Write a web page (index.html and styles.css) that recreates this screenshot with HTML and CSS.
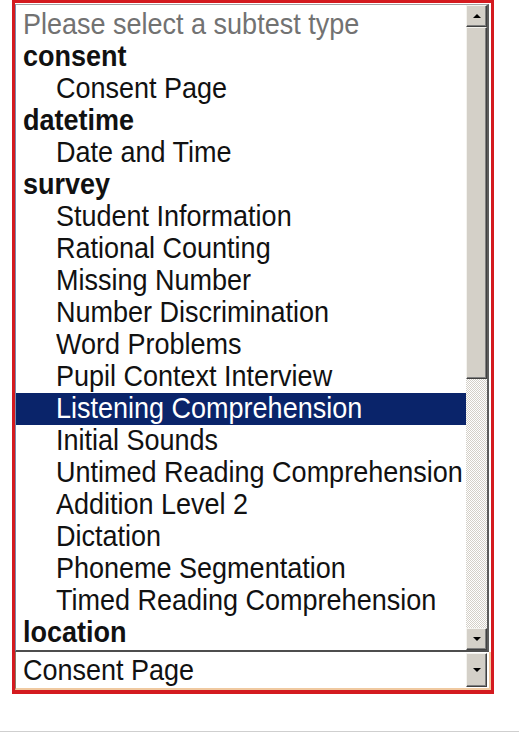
FILE: index.html
```html
<!DOCTYPE html>
<html>
<head>
<meta charset="utf-8">
<link rel="stylesheet" href="styles.css">
</head>
<body>
<div class="frame">
  <div class="listbox">
    <ul class="options">
      <li class="row opt placeholder"><span class="txt">Please select a subtest type</span></li>
      <li class="row grp"><span class="txt">consent</span></li>
      <li class="row opt"><span class="txt">Consent Page</span></li>
      <li class="row grp"><span class="txt">datetime</span></li>
      <li class="row opt"><span class="txt">Date and Time</span></li>
      <li class="row grp"><span class="txt">survey</span></li>
      <li class="row opt"><span class="txt">Student Information</span></li>
      <li class="row opt"><span class="txt">Rational Counting</span></li>
      <li class="row opt"><span class="txt">Missing Number</span></li>
      <li class="row opt"><span class="txt">Number Discrimination</span></li>
      <li class="row opt"><span class="txt">Word Problems</span></li>
      <li class="row opt"><span class="txt">Pupil Context Interview</span></li>
      <li class="row opt selected"><span class="txt">Listening Comprehension</span></li>
      <li class="row opt"><span class="txt">Initial Sounds</span></li>
      <li class="row opt"><span class="txt">Untimed Reading Comprehension</span></li>
      <li class="row opt"><span class="txt">Addition Level 2</span></li>
      <li class="row opt"><span class="txt">Dictation</span></li>
      <li class="row opt"><span class="txt">Phoneme Segmentation</span></li>
      <li class="row opt"><span class="txt">Timed Reading Comprehension</span></li>
      <li class="row grp"><span class="txt">location</span></li>
    </ul>
    <div class="scrollbar">
      <div class="sb-btn"><span class="arrow-up"></span></div>
      <div class="sb-thumb"></div>
      <div class="sb-track"></div>
      <div class="sb-btn"><span class="arrow-down"></span></div>
    </div>
  </div>
  <div class="combo">
    <span class="combo-text"><span class="txt">Consent Page</span></span>
    <div class="combo-btn"><span class="arrow-down"></span></div>
  </div>
</div>
<div class="footer-line"></div>
</body>
</html>
```
FILE: styles.css
```css
html, body {
  margin: 0;
  padding: 0;
  background: #ffffff;
}

body {
  width: 519px;
  height: 733px;
  overflow: hidden;
  font-family: "Liberation Sans", Arial, sans-serif;
  color: #111111;
}

.frame {
  margin-left: 12px;
  width: 476px;
  border: 3px solid #d41a1f;
  border-bottom-width: 4px;
  background: #ffffff;
}

.listbox {
  display: flex;
  margin-top: 1px;
  margin-right: 2px;
  height: 648px;
  box-sizing: border-box;
  border-top: 1px solid #a3a3a3;
  border-left: 1px solid #7d8cab;
  border-right: 2px solid #5c5c5c;
  border-bottom: 2px solid #4e4e4e;
}

.options {
  list-style: none;
  margin: 0;
  padding: 4px 0 0 0;
  width: 450px;
  overflow: hidden;
}

.row {
  height: 32px;
  line-height: 30px;
  font-size: 30px;
  white-space: nowrap;
}

.txt {
  display: inline-block;
  transform: scaleX(0.9);
  transform-origin: 0 50%;
}

.grp {
  padding-left: 7px;
  font-weight: bold;
}

.opt {
  padding-left: 40px;
}

.placeholder {
  padding-left: 7px;
  color: #727272;
}

.selected {
  background: #0a246a;
  color: #ffffff;
}

.scrollbar {
  width: 21px;
  display: flex;
  flex-direction: column;
}

.sb-btn {
  height: 22px;
  box-sizing: border-box;
  background: #d4d0c8;
  border-top: 1px solid #f4f3ef;
  border-left: 1px solid #f4f3ef;
  border-right: 1px solid #404040;
  border-bottom: 1px solid #404040;
  box-shadow: inset -1px -1px 0 #808080;
  display: flex;
  align-items: center;
  justify-content: center;
}

.sb-thumb {
  height: 352px;
  box-sizing: border-box;
  background: #d4d0c8;
  border-top: 1px solid #f4f3ef;
  border-left: 1px solid #f4f3ef;
  border-right: 1px solid #404040;
  border-bottom: 1px solid #404040;
  box-shadow: inset -1px -1px 0 #808080;
}

.sb-track {
  flex: 1;
  background-color: #ffffff;
  background-image: conic-gradient(#d4d0c8 25%, #ffffff 0 50%, #d4d0c8 0 75%, #ffffff 0);
  background-size: 2px 2px;
}

.arrow-up {
  width: 0;
  height: 0;
  border-left: 4px solid transparent;
  border-right: 4px solid transparent;
  border-bottom: 4px solid #000000;
}

.arrow-down {
  width: 0;
  height: 0;
  border-left: 4px solid transparent;
  border-right: 4px solid transparent;
  border-top: 4px solid #000000;
}

.combo {
  display: flex;
  height: 38px;
  box-sizing: border-box;
  border-left: 1px solid #8a7a66;
  border-right: 2px solid #f0c9a0;
  border-bottom: 2px solid #f0c9a0;
  background: #ffffff;
}

.combo-text {
  flex: 1;
  padding-left: 7px;
  font-size: 30px;
  line-height: 36px;
  white-space: nowrap;
}

.combo-btn {
  width: 21px;
  margin: 1px 2px 1px 0;
  box-sizing: border-box;
  background: #d4d0c8;
  border-top: 1px solid #f4f3ef;
  border-left: 1px solid #f4f3ef;
  border-right: 1px solid #404040;
  border-bottom: 1px solid #404040;
  box-shadow: inset -1px -1px 0 #808080;
  display: flex;
  align-items: center;
  justify-content: center;
}

.footer-line {
  margin-top: 37px;
  height: 1px;
  background: #cfcfcf;
}
```
